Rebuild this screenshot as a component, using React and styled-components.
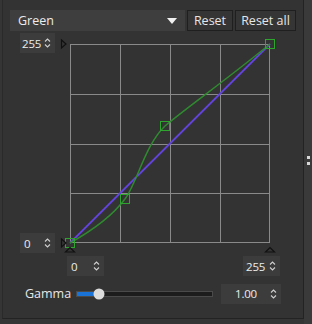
import React from "react";
import styled, { createGlobalStyle } from "styled-components";

const Global = createGlobalStyle`
  html, body {
    margin: 0;
    padding: 0;
    background: #353535;
    font-family: "Open Sans", "Noto Sans", sans-serif;
    font-size: 12px;
    color: #e2e2e2;
  }
`;

const Screen = styled.div`
  display: flex;
  width: 312px;
  height: 324px;
  overflow: hidden;
`;

const Panel = styled.div`
  box-sizing: border-box;
  width: 302px;
  height: 319px;
  margin-left: 2px;
  background: #333333;
  border-left: 1px solid #2a2a2a;
  border-right: 1px solid #232323;
  border-bottom: 1px solid #232323;
  padding: 10px 0 0 7px;
  display: flex;
  flex-direction: column;
`;

const Gutter = styled.div`
  flex: 1;
  background: #3a3a3a;
  display: flex;
  align-items: center;
  justify-content: center;
`;

const Grip = styled.div`
  display: flex;
  flex-direction: column;
  gap: 3px;
  margin-top: -4px;
  span {
    width: 3px;
    height: 3px;
    background: #d8d8d8;
  }
`;

const TopBar = styled.div`
  display: flex;
  height: 21px;
`;

const Select = styled.div`
  box-sizing: border-box;
  width: 175px;
  height: 21px;
  background: #3e3e3e;
  display: flex;
  align-items: center;
  justify-content: space-between;
  padding: 0 8px 0 8px;
  color: #ececec;
  font-size: 12.5px;
`;

const Button = styled.div`
  box-sizing: border-box;
  height: 21px;
  width: ${(p) => p.$w}px;
  margin-left: ${(p) => p.$ml}px;
  background: #353535;
  border: 1px solid #1f1f1f;
  display: flex;
  align-items: center;
  justify-content: center;
  color: #e6e6e6;
  font-size: 12.5px;
`;

const CurveArea = styled.div`
  display: flex;
  margin-top: 2px;
  padding-left: 10px;
`;

const SideSpins = styled.div`
  display: flex;
  flex-direction: column;
  justify-content: space-between;
  height: 220px;
  width: 35px;
`;

const Spin = styled.div`
  box-sizing: border-box;
  width: ${(p) => p.$w}px;
  height: 20px;
  background: #3c3c3c;
  display: flex;
  align-items: center;
  justify-content: space-between;
  padding: 0 4px 0 ${(p) => p.$pl || 2}px;
  color: #ececec;
  font-size: 11.5px;
  letter-spacing: -0.2px;
`;

const BottomSpins = styled.div`
  display: flex;
  justify-content: space-between;
  width: 213px;
  margin-left: 57px;
`;

const GammaRow = styled.div`
  display: flex;
  align-items: center;
  height: 19px;
  margin-top: 8px;
  padding-left: 15px;
`;

const Label = styled.div`
  width: 51px;
  color: #e8e8e8;
  font-size: 12.5px;
`;

const Track = styled.div`
  position: relative;
  box-sizing: border-box;
  width: 137px;
  height: 6px;
  background: #1c1c1c;
  border: 1px solid #4a4a4a;
  margin-right: 8px;
`;

const Fill = styled.div`
  height: 100%;
  background: #1a73d6;
`;

const Thumb = styled.div`
  position: absolute;
  top: 50%;
  width: 11px;
  height: 11px;
  border-radius: 50%;
  background: #dcdcdc;
  transform: translate(-50%, -50%);
`;

const Arrows = () => (
  <svg width="7" height="12" viewBox="0 0 7 12">
    <path d="M1 4.5 L3.5 2 L6 4.5 M1 7.5 L3.5 10 L6 7.5" fill="none" stroke="#cfcfcf" strokeWidth="1.1" />
  </svg>
);

const Caret = () => (
  <svg width="10" height="6" viewBox="0 0 10 6">
    <path d="M0 0 H10 L5 6 Z" fill="#f0f0f0" />
  </svg>
);

const CurveGraph = () => {
  const x0 = 15, y0 = 11, s = 200;
  const grid = [1, 2, 3].map((i) => x0 + (s * i) / 4);
  const pts = [
    [15, 210],
    [70, 166],
    [110, 93],
    [215, 11],
  ];
  return (
    <svg width="225" height="223" viewBox="0 0 225 223" style={{ display: "block" }}>
      <rect x={x0 + 0.5} y={y0 + 0.5} width={s - 1} height={s - 2} fill="none" stroke="#8a8a8a" strokeWidth="1" />
      {grid.map((g) => (
        <line key={"v" + g} x1={g + 0.5} y1={y0} x2={g + 0.5} y2={y0 + s - 1} stroke="#8a8a8a" strokeWidth="1" />
      ))}
      {[1, 2, 3].map((i) => {
        const g = y0 + Math.round((199 * i) / 4);
        return <line key={"h" + i} x1={x0} y1={g + 0.5} x2={x0 + s} y2={g + 0.5} stroke="#8a8a8a" strokeWidth="1" />;
      })}
      <line x1="15" y1="210" x2="215" y2="11" stroke="#6a3ad0" strokeWidth="1.8" />
      <line x1="15" y1="210" x2="215" y2="11" stroke="#4a5cf0" strokeWidth="0.7" />
      <path
        d="M15 210 C40 196 58 182 70 166 C82 150 90 112 110 93 C130 76 175 44 215 11"
        fill="none"
        stroke="#2f8a2f"
        strokeWidth="1.5"
      />
      {pts.map(([x, y]) => (
        <rect key={x} x={x - 4.5} y={y - 4.5} width="9" height="9" fill="none" stroke="#2fa52f" strokeWidth="1" />
      ))}
      <path d="M6.5 7 L11 11 L6.5 15 Z" fill="none" stroke="#111" strokeWidth="1.2" />
      <path d="M6.5 206 L11 210 L6.5 214 Z" fill="none" stroke="#111" strokeWidth="1.2" />
      <path d="M10.5 219 L15 214.5 L19.5 219 Z" fill="none" stroke="#111" strokeWidth="1.2" />
      <path d="M210.5 219 L215 214.5 L219.5 219 Z" fill="none" stroke="#111" strokeWidth="1.2" />
    </svg>
  );
};

export default function App() {
  return (
    <Screen>
      <Global />
      <Panel>
        <TopBar>
          <Select>
            <span>Green</span>
            <Caret />
          </Select>
          <Button $w={46} $ml={2}>Reset</Button>
          <Button $w={61} $ml={2}>Reset all</Button>
        </TopBar>
        <CurveArea>
          <SideSpins>
            <Spin $w={35}>
              <span>255</span>
              <Arrows />
            </Spin>
            <Spin $w={35} $pl={4}>
              <span>0</span>
              <Arrows />
            </Spin>
          </SideSpins>
          <CurveGraph />
        </CurveArea>
        <BottomSpins>
          <Spin $w={37} $pl={4}>
            <span>0</span>
            <Arrows />
          </Spin>
          <Spin $w={37} $pl={3}>
            <span>255</span>
            <Arrows />
          </Spin>
        </BottomSpins>
        <GammaRow>
          <Label>Gamma</Label>
          <Track>
            <Fill style={{ width: "16%" }} />
            <Thumb style={{ left: "16%" }} />
          </Track>
          <Spin $w={60} $pl={14}>
            <span>1.00</span>
            <Arrows />
          </Spin>
        </GammaRow>
      </Panel>
      <Gutter>
        <Grip>
          <span />
          <span />
        </Grip>
      </Gutter>
    </Screen>
  );
}
